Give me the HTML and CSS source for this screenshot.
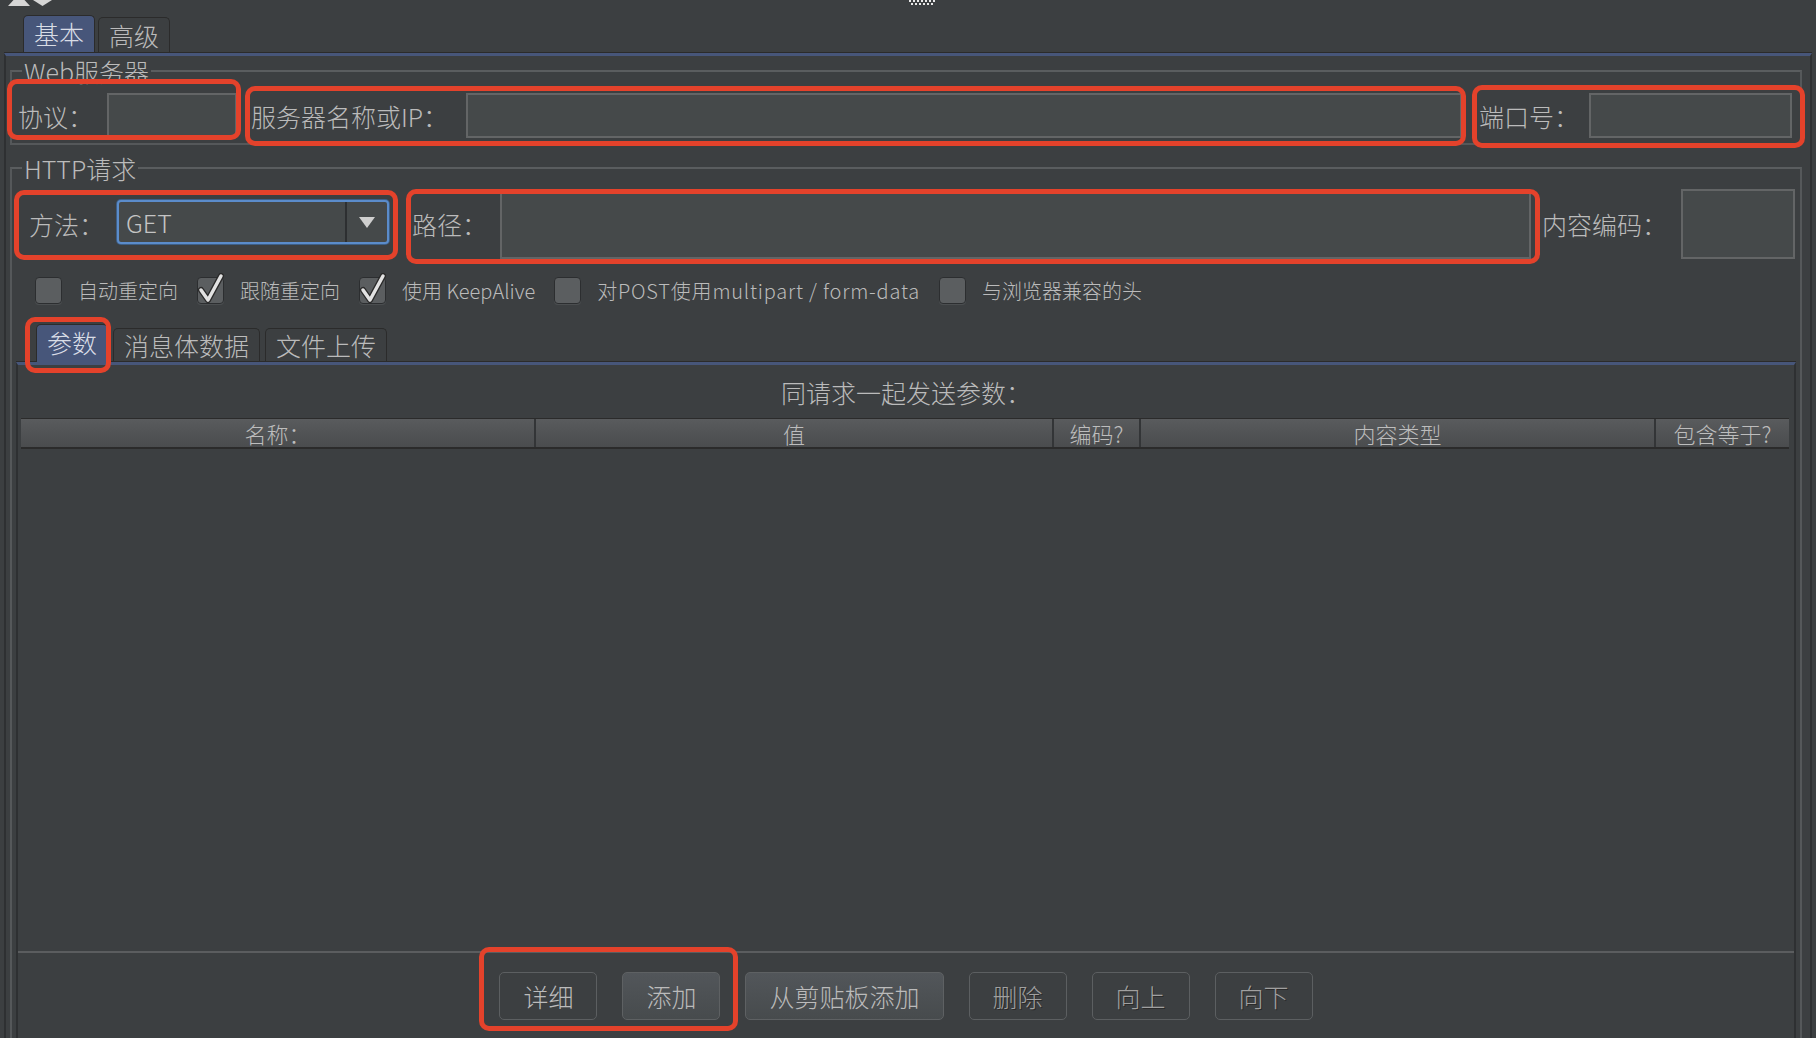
FILE: index.html
```html
<!DOCTYPE html>
<html lang="zh">
<head>
    <meta charset="utf-8">
    <title>HTTP请求</title>
    <link rel="stylesheet" href="styles.css">
</head>
<body>
    <div class="topStrip">
        <svg class="splitArrows" width="60" height="8" viewBox="0 0 60 8">
            <polygon points="8,6 30,6 19,-6" fill="#d6d6d6"/>
            <polygon points="33,0 52,0 42.5,6" fill="#d6d6d6"/>
        </svg>
        <svg class="grip" width="28" height="5" viewBox="0 0 28 5">
            <g fill="#e8e8e8">
                <rect x="0" y="0" width="2" height="2"/><rect x="4" y="0" width="2" height="2"/>
                <rect x="8" y="0" width="2" height="2"/><rect x="12" y="0" width="2" height="2"/>
                <rect x="16" y="0" width="2" height="2"/><rect x="20" y="0" width="2" height="2"/>
                <rect x="24" y="0" width="2" height="2"/>
                <rect x="2" y="3" width="2" height="2"/><rect x="6" y="3" width="2" height="2"/>
                <rect x="10" y="3" width="2" height="2"/><rect x="14" y="3" width="2" height="2"/>
                <rect x="18" y="3" width="2" height="2"/><rect x="22" y="3" width="2" height="2"/>
            </g>
        </svg>
    </div>

    <div class="mainTabs">
        <div class="tab active">基本</div>
        <div class="tab">高级</div>
    </div>

    <div class="panel">
        <fieldset class="group webGroup">
            <legend>Web服务器</legend>
            <div class="serverRow">
                <label class="lblProto">协议：</label>
                <div class="field fProto"></div>
                <label class="lblHost">服务器名称或IP：</label>
                <div class="field fHost"></div>
                <label class="lblPort">端口号：</label>
                <div class="field fPort"></div>
            </div>
        </fieldset>

        <fieldset class="group httpGroup">
            <legend>HTTP请求</legend>
            <div class="requestRow">
                <label class="lblMethod">方法：</label>
                <div class="combo">
                    <span class="comboValue">GET</span>
                    <span class="comboArrow"><i></i></span>
                </div>
                <label class="lblPath">路径：</label>
                <div class="field fPath"></div>
                <label class="lblEnc">内容编码：</label>
                <div class="field fEnc"></div>
            </div>

            <div class="checkRow">
                <span class="check"></span><span class="checkText">自动重定向</span>
                <span class="check on"><svg width="30" height="34" viewBox="0 0 30 34"><path d="M5 17 L12 27 L25 3" /><path d="M5 17 L12 27 L25 3" /></svg></span><span class="checkText">跟随重定向</span>
                <span class="check on"><svg width="30" height="34" viewBox="0 0 30 34"><path d="M5 17 L12 27 L25 3" /><path d="M5 17 L12 27 L25 3" /></svg></span><span class="checkText">使用 KeepAlive</span>
                <span class="check"></span><span class="checkText wide">对POST使用multipart / form-data</span>
                <span class="check"></span><span class="checkText">与浏览器兼容的头</span>
            </div>

            <div class="subTabs">
                <div class="subTab active">参数</div>
                <div class="subTab">消息体数据</div>
                <div class="subTab">文件上传</div>
            </div>

            <div class="subPanel">
                <div class="caption">同请求一起发送参数：</div>
                <div class="paramTable">
                    <div class="thead">
                        <div class="th c1">名称：</div>
                        <div class="th c2">值</div>
                        <div class="th c3">编码?</div>
                        <div class="th c4">内容类型</div>
                        <div class="th c5">包含等于?</div>
                    </div>
                    <div class="tbody"></div>
                </div>
                <div class="buttonRow">
                    <button class="btn">详细</button>
                    <button class="btn raised">添加</button>
                    <button class="btn raised">从剪贴板添加</button>
                    <button class="btn off">删除</button>
                    <button class="btn off">向上</button>
                    <button class="btn off">向下</button>
                </div>
            </div>
        </fieldset>
    </div>

    <!-- annotation boxes drawn over the screenshot -->
    <div class="mark m1"></div>
    <div class="mark m2"></div>
    <div class="mark m3"></div>
    <div class="mark m4"></div>
    <div class="mark m5"></div>
    <div class="mark m6"></div>
    <div class="mark m7"></div>
</body>
</html>
```

FILE: styles.css
```css
* {
    box-sizing: border-box;
}
body {
    margin: 0;
    width: 1816px;
    height: 1038px;
    overflow: hidden;
    position: relative;
    background-color: #3c3f41;
    color: #bbbbbb;
    font-family: "Noto Sans CJK SC", "Noto Sans", sans-serif;
    font-size: 25px;
    font-weight: 300;
}
.topStrip {
    height: 15px;
    position: relative;
}
.splitArrows {
    position: absolute;
    left: 0;
    top: 0;
}
.grip {
    position: absolute;
    left: 909px;
    top: 0;
}
.mainTabs {
    display: flex;
    align-items: flex-end;
    gap: 3px;
    height: 37px;
    margin: 0 0 1px 23px;
}
.tab {
    height: 35px;
    line-height: 34px;
    padding: 0 10px;
    border: 1px solid #2b2b2b;
    border-bottom: none;
    border-radius: 5px 5px 0 0;
    background-color: #3c3f41;
}
.tab.active {
    height: 37px;
    line-height: 35px;
    background-color: #47567a;
    color: #d9dde6;
}
.panel {
    margin-left: 4px;
    width: 1808px;
    height: 990px;
    border-top: 3px solid #47567a;
    border-left: 2px solid #2e3032;
    border-right: 2px solid #2e3032;
    box-shadow: 0 -1px 0 #2b2b2b;
    padding: 0 8px 0 4px;
}
.group {
    margin: 0;
    padding: 0;
    min-width: 0;
    border: 2px solid #55585a;
    border-top-color: #5a5d5f;
}
.group legend {
    margin-left: 10px;
    padding: 0 2px;
    line-height: 26px;
    font-size: 25px;
}
.webGroup {
    margin-top: 2px;
    padding-bottom: 5px;
}
.serverRow {
    display: flex;
    align-items: center;
    margin-top: 9px;
    padding: 0 8px 0 6px;
    height: 45px;
}
.field {
    height: 45px;
    background-color: #45494a;
    border: 2px solid #636566;
}
.lblProto { width: 89px; }
.fProto { width: 130px; }
.lblHost { width: 215px; margin-left: 14px; }
.fHost { flex: 1; }
.lblPort { width: 110px; margin-left: 17px; }
.fPort { width: 203px; }

.httpGroup {
    margin-top: 10px;
    height: 900px;
}
.requestRow {
    display: flex;
    align-items: flex-start;
    height: 70px;
    margin-top: 8px;
    padding: 0 5px 0 17px;
}
.requestRow label {
    align-self: center;
}
.lblMethod { width: 88px; }
.combo {
    display: flex;
    width: 272px;
    height: 44px;
    margin-top: 11px;
    border: 2px solid #5b8ccb;
    border-radius: 4px;
    box-shadow: 0 0 0 1px #3e5f86;
    background-color: #45494a;
}
.comboValue {
    flex: 1;
    padding-left: 7px;
    line-height: 40px;
    color: #c4c4c4;
}
.comboArrow {
    width: 42px;
    border-left: 2px solid #2d2f31;
    display: flex;
    align-items: center;
    justify-content: center;
}
.comboArrow i {
    width: 0;
    height: 0;
    border-left: 8px solid transparent;
    border-right: 8px solid transparent;
    border-top: 11px solid #cfcfcf;
}
.lblPath { width: 88px; margin-left: 23px; }
.fPath {
    flex: 1;
    height: 67px;
    margin-top: 3px;
}
.lblEnc { width: 139px; margin-left: 11px; }
.fEnc {
    width: 114px;
    height: 70px;
}

.checkRow {
    display: flex;
    align-items: center;
    height: 27px;
    margin-top: 18px;
    padding-left: 23px;
    font-size: 20px;
}
.check {
    position: relative;
    flex: none;
    width: 27px;
    height: 27px;
    border-radius: 4px;
    background-color: #5b5e60;
    border: 1px solid #2c2e30;
    box-shadow: 0 1px 0 #4b4e50;
}
.check svg {
    position: absolute;
    left: -2px;
    top: -5px;
    fill: none;
    stroke-linecap: round;
    stroke-linejoin: round;
}
.check svg path:first-child {
    stroke: #2a2a2a;
    stroke-width: 6;
}
.check svg path:last-child {
    stroke: #e2e2e2;
    stroke-width: 3.5;
}
.checkText {
    margin: 0 19px 0 16px;
}
.checkText.wide {
    letter-spacing: 0.8px;
}

.subTabs {
    display: flex;
    align-items: flex-end;
    gap: 5px;
    height: 38px;
    margin-top: 20px;
    padding-left: 24px;
}
.subTab {
    height: 34px;
    line-height: 32px;
    padding: 0 10px;
    border: 1px solid #2b2b2b;
    border-bottom: none;
    border-radius: 5px 5px 0 0;
}
.subTab.active {
    height: 38px;
    line-height: 34px;
    background-color: #47567a;
    color: #d9dde6;
}
.subPanel {
    margin: 0 4px 0 4px;
    height: 700px;
    border-top: 3px solid #47567a;
    border-left: 2px solid #2e3032;
    border-right: 2px solid #2e3032;
    box-shadow: 0 -1px 0 #2b2b2b;
}
.caption {
    text-align: center;
    line-height: 30px;
    margin: 12px 0 11px;
}
.paramTable {
    margin: 0 5px 0 3px;
}
.thead {
    display: flex;
    height: 31px;
    border-top: 1px solid #2b2b2b;
    border-bottom: 2px solid #2b2b2b;
    background: linear-gradient(#595b5d, #4a4c4e);
    font-size: 22px;
    color: #bdbdbd;
}
.th {
    text-align: center;
    line-height: 28px;
    border-right: 2px solid #333537;
}
.th:last-child { border-right: none; }
.c1 { width: 515px; }
.c2 { width: 518px; }
.c3 { width: 87px; }
.c4 { width: 515px; }
.c5 { flex: 1; }
.tbody {
    height: 502px;
}
.buttonRow {
    display: flex;
    justify-content: center;
    gap: 25px;
    padding-top: 19px;
    border-top: 2px solid #5b5d5f;
}
.btn {
    height: 48px;
    padding: 0 23px;
    border: 1px solid #5c5f61;
    border-radius: 5px;
    background-color: #3c3f41;
    color: #bbbbbb;
    font-family: inherit;
    font-size: 25px;
    font-weight: 300;
    line-height: 44px;
}
.btn.raised {
    background: linear-gradient(#52565a, #474b4d);
    border-color: #5e6163;
}
.btn.off {
    color: #a0a0a0;
    text-shadow: 1px 1px 0 #2a2a2a;
}

.mark {
    position: absolute;
    border: 5px solid #e4422b;
    border-radius: 10px;
}
.m1 { left: 7px; top: 79px; width: 234px; height: 61px; }
.m2 { left: 245px; top: 86px; width: 1221px; height: 60px; }
.m3 { left: 1472px; top: 85px; width: 333px; height: 63px; }
.m4 { left: 14px; top: 190px; width: 384px; height: 70px; }
.m5 { left: 406px; top: 189px; width: 1134px; height: 75px; }
.m6 { left: 25px; top: 317px; width: 86px; height: 56px; }
.m7 { left: 479px; top: 947px; width: 259px; height: 84px; }
```
